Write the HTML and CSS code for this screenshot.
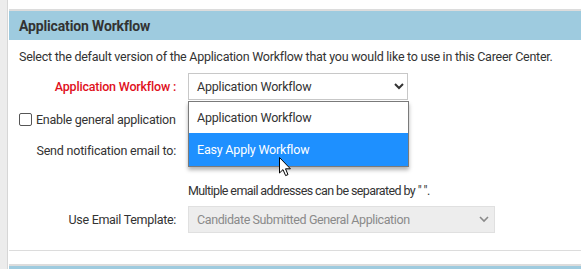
FILE: index.html
```html
<!DOCTYPE html>
<html>
<head>
<meta charset="utf-8">
<link rel="stylesheet" href="styles.css">
</head>
<body>
<div class="page">
  <div class="side"></div>
  <div class="main">
    <section class="panel">
      <div class="panel-header">Application Workflow</div>
      <div class="panel-body">
        <p class="intro">Select the default version of the Application Workflow that you would like to use in this Career Center.</p>
        <div class="row row-workflow">
          <div class="label label-red">Application Workflow :</div>
          <div class="control">
            <div class="select">
              <span>Application Workflow</span>
              <svg class="chev" width="10" height="7" viewBox="0 0 10 7"><polyline points="1,1 5,5 9,1" fill="none" stroke="#333" stroke-width="2"/></svg>
            </div>
            <div class="dropdown">
              <div class="opt">Application Workflow</div>
              <div class="opt opt-active">Easy Apply Workflow</div>
            </div>
            <svg class="cursor" width="13" height="20" viewBox="0 0 13 20"><path d="M0.5 0.5 L0.5 16 L4 12.6 L6.6 18.6 L9 17.6 L6.5 11.8 L11.4 11.8 Z" fill="#fff" stroke="#000" stroke-width="1" stroke-linejoin="round"/></svg>
          </div>
        </div>
        <div class="row-check">
          <span class="checkbox"></span>
          <span class="check-label">Enable general application</span>
        </div>
        <div class="row row-notify">
          <div class="label">Send notification email to:</div>
          <div class="control"></div>
        </div>
        <div class="row row-hint">
          <div class="label"></div>
          <div class="control hint">Multiple email addresses can be separated by " ".</div>
        </div>
        <div class="row row-template">
          <div class="label label-tight">Use Email Template:</div>
          <div class="control">
            <div class="select select-disabled">
              <span>Candidate Submitted General Application</span>
              <svg class="chev" width="10" height="7" viewBox="0 0 10 7"><polyline points="1,1 5,5 9,1" fill="none" stroke="#8a8a8a" stroke-width="1.6"/></svg>
            </div>
          </div>
        </div>
      </div>
    </section>
    <section class="panel panel-next">
      <div class="panel-header"></div>
    </section>
  </div>
</div>
</body>
</html>
```

FILE: styles.css
```css
* { box-sizing: border-box; }
html, body { margin: 0; padding: 0; background: #fff; }
body {
  font-family: Roboto, "Liberation Sans", sans-serif;
  font-size: 12.5px;
  letter-spacing: -0.2px;
  color: #333;
  overflow: hidden;
}
.page { display: flex; height: 269px; }
.side {
  width: 8px;
  flex: none;
  background: #ececec;
  border-right: 1px solid #d6d6d6;
}
.main { flex: 1; padding-top: 9px; padding-left: 1px; }
.panel {
  border-top: 2px solid #dcdcdc;
  border-bottom: 1px solid #dcdcdc;
}
.panel-header {
  height: 29px;
  background: #9ecbdf;
  padding-left: 10px;
  font-size: 14px;
  font-weight: 700;
  letter-spacing: -0.15px;
  line-height: 30px;
  color: #333;
}
.panel-body { padding: 9px 0 17px 10px; }
.intro { margin: 0; line-height: 15px; white-space: nowrap; letter-spacing: -0.25px; }
.row { display: flex; align-items: center; }
.label {
  width: 157px;
  flex: none;
  text-align: right;
  margin-right: 12px;
  white-space: nowrap;
}
.label-red { color: #e0101c; font-weight: 500; letter-spacing: -0.2px; }
.label-tight { letter-spacing: -0.3px; }
.control { position: relative; }
.hint { letter-spacing: -0.6px; white-space: nowrap; }
.row-workflow { margin-top: 9px; }
.select {
  width: 220px;
  height: 27px;
  border: 1px solid #c8c8c8;
  background: #fff;
  display: flex;
  align-items: center;
  justify-content: space-between;
  padding: 0 3px 0 8px;
}
.select-disabled {
  width: 307px;
  background: #ededed;
  border-color: #e0e0e0;
  color: #8a8a8a;
  padding-right: 5px;
  letter-spacing: -0.4px;
}
.dropdown {
  position: absolute;
  top: 28px;
  left: 0;
  width: 221px;
  background: #fff;
  border: 1px solid #7a7a7a;
  box-shadow: 0 3px 4px rgba(0,0,0,0.3);
  z-index: 2;
}
.opt { height: 31px; line-height: 31px; padding-left: 8px; }
.opt-active { height: 33px; line-height: 33px; background: #1e90ff; color: #fff; }
.cursor { position: absolute; left: 91px; top: 84px; z-index: 3; }
.row-check {
  display: flex;
  align-items: center;
  margin-top: 12px;
  height: 14px;
}
.check-label { letter-spacing: -0.25px; }
.checkbox {
  width: 13px;
  height: 13px;
  border: 1px solid #555;
  border-radius: 2px;
  margin-right: 4px;
  background: #fff;
}
.row-notify { margin-top: 16px; height: 16px; }
.row-hint { margin-top: 24px; height: 16px; }
.row-template { margin-top: 8px; }
.panel-next { margin-top: 13px; border-bottom: none; }
```
